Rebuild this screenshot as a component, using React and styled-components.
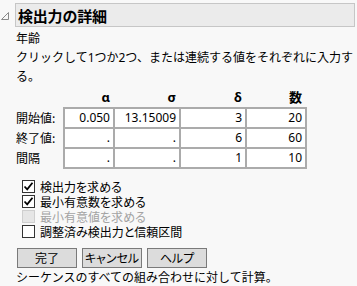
import React from "react";
import styled, { createGlobalStyle } from "styled-components";

const GlobalStyle = createGlobalStyle`
  html, body {
    margin: 0;
    padding: 0;
    background: #f8f8f8;
  }
  body {
    font-family: "Noto Sans", "Noto Sans CJK JP", sans-serif;
    color: #000;
  }
`;

const Panel = styled.div`
  width: 357px;
  height: 286px;
  padding-top: 3px;
  box-sizing: border-box;
  overflow: hidden;
`;

const HeaderRow = styled.div`
  display: flex;
  align-items: stretch;
  padding-right: 2px;
`;

const Disclosure = styled.div`
  width: 15px;
  display: flex;
  align-items: flex-start;
  padding-top: 8px;
  box-sizing: border-box;
`;

const TitleBar = styled.div`
  flex: 1;
  height: 24px;
  box-sizing: border-box;
  background: #ebebeb;
  border: 1px solid #c6c6c6;
  display: flex;
  align-items: center;
  padding-left: 2px;
  font-family: "Noto Sans CJK JP", sans-serif;
  font-weight: 700;
  font-size: 15px;
  letter-spacing: -0.2px;
`;

const Body = styled.div`
  padding-left: 16px;
  font-family: "Noto Sans", "Noto Sans CJK JP", sans-serif;
  font-size: 12px;
`;

const Line = styled.div`
  line-height: 19px;
  margin-top: ${(p) => p.$top || 0}px;
`;

const Grid = styled.table`
  border-collapse: collapse;
  margin-top: 1px;
`;

const Head = styled.th`
  font-family: "Noto Sans", "Noto Sans CJK JP", sans-serif;
  font-size: 13px;
  font-weight: 700;
  text-align: right;
  padding: 0 4px 0 0;
  height: 20px;
  line-height: 20px;
`;

const RowLabel = styled.td`
  width: 47px;
  padding: 0;
  height: 20px;
  line-height: 18px;
  font-family: "Noto Sans CJK JP", sans-serif;
  font-size: 12px;
`;

const Cell = styled.td`
  width: ${(p) => p.$w}px;
  height: 20px;
  box-sizing: border-box;
  border: 2px solid #ababab;
  background: #fff;
  text-align: right;
  padding: 0 3px 0 0;
  font-size: 12px;
  line-height: 16px;
`;

const Checks = styled.div`
  display: flex;
  flex-direction: column;
  margin-top: 10px;
  padding-left: 6px;
`;

const CheckRow = styled.label`
  display: flex;
  align-items: center;
  height: 15px;
  line-height: 15px;
  gap: 5px;
  font-family: "Noto Sans CJK JP", sans-serif;
  font-size: 12px;
  font-feature-settings: "palt";
  color: ${(p) => (p.$disabled ? "#a3a3a3" : "#000")};
`;

const Box = styled.span`
  width: 13px;
  height: 13px;
  flex: none;
  box-sizing: border-box;
  border: 1px solid ${(p) => (p.$disabled ? "#cfcfcf" : "#333")};
  background: ${(p) => (p.$disabled ? "#e6e6e6" : "#fff")};
  display: flex;
  align-items: center;
  justify-content: center;
`;

const Buttons = styled.div`
  display: flex;
  gap: 5px;
  margin-top: 9px;
  padding-left: 1px;
`;

const Button = styled.button`
  width: 60px;
  height: 20px;
  box-sizing: border-box;
  border: 1px solid #7a7a7a;
  background: #dcdcdc;
  padding: 0;
  font-family: "Noto Sans CJK JP", sans-serif;
  font-size: 12px;
  font-feature-settings: "palt";
  color: #000;
  line-height: 18px;
`;

const Note = styled.div`
  line-height: 18px;
  font-family: "Noto Sans CJK JP", sans-serif;
  font-size: 12px;
`;

const Tick = () => (
  <svg width="11" height="11" viewBox="0 0 11 11">
    <path d="M1.5 5.5 L4.2 8.3 L9.5 1.8" fill="none" stroke="#000" strokeWidth="1.8" />
  </svg>
);

const rows = [
  { label: "開始値:", values: ["0.050", "13.15009", "3", "20"] },
  { label: "終了値:", values: [".", ".", "6", "60"] },
  { label: "間隔", values: [".", ".", "1", "10"] },
];

const widths = [50, 66, 66, 60];
const heads = ["α", "σ", "δ", "数"];

const checks = [
  { text: "検出力を求める", on: true },
  { text: "最小有意数を求める", on: true },
  { text: "最小有意値を求める", disabled: true },
  { text: "調整済み検出力と信頼区間" },
];

export default function App() {
  return (
    <>
      <GlobalStyle />
      <Panel>
        <HeaderRow>
          <Disclosure>
            <svg width="10" height="10" viewBox="0 0 10 10">
              <polygon points="8.5,1.5 8.5,8.5 1.5,8.5" fill="none" stroke="#8a8a8a" strokeWidth="1" />
            </svg>
          </Disclosure>
          <TitleBar>検出力の詳細</TitleBar>
        </HeaderRow>
        <Body>
          <Line $top={2}>年齢</Line>
          <Line>クリックして1つか2つ、または連続する値をそれぞれに入力する。</Line>
          <Grid>
            <thead>
              <tr>
                <Head />
                {heads.map((h) => (
                  <Head key={h}>{h}</Head>
                ))}
              </tr>
            </thead>
            <tbody>
              {rows.map((r) => (
                <tr key={r.label}>
                  <RowLabel>{r.label}</RowLabel>
                  {r.values.map((v, i) => (
                    <Cell key={i} $w={widths[i]}>
                      {v}
                    </Cell>
                  ))}
                </tr>
              ))}
            </tbody>
          </Grid>
          <Checks>
            {checks.map((c) => (
              <CheckRow key={c.text} $disabled={c.disabled}>
                <Box $disabled={c.disabled}>{c.on && <Tick />}</Box>
                {c.text}
              </CheckRow>
            ))}
          </Checks>
          <Buttons>
            <Button>完了</Button>
            <Button>キャンセル</Button>
            <Button>ヘルプ</Button>
          </Buttons>
          <Note>シーケンスのすべての組み合わせに対して計算。</Note>
        </Body>
      </Panel>
    </>
  );
}
